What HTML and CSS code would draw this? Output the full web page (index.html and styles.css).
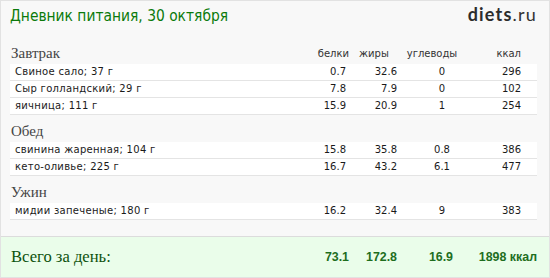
FILE: index.html
```html
<!DOCTYPE html>
<html lang="ru">
<head>
<meta charset="utf-8">
<link rel="stylesheet" href="styles.css">
</head>
<body>
<div class="card">
  <div class="top">
    <div class="title">Дневник питания, 30 октября</div>
    <div class="logo"><b>diets</b>.ru</div>
  </div>

  <div class="section">
    <div class="shead">
      <div class="sname">Завтрак</div>
      <div class="h h1">белки</div>
      <div class="h h2">жиры</div>
      <div class="h h3">углеводы</div>
      <div class="h h4">ккал</div>
    </div>
    <div class="row"><div class="n">Свиное сало; 37 г</div><div class="c1">0.7</div><div class="c2">32.6</div><div class="c3">0</div><div class="c4">296</div></div>
    <div class="row"><div class="n">Сыр голландский; 29 г</div><div class="c1">7.8</div><div class="c2">7.9</div><div class="c3">0</div><div class="c4">102</div></div>
    <div class="row"><div class="n">яичница; 111 г</div><div class="c1">15.9</div><div class="c2">20.9</div><div class="c3">1</div><div class="c4">254</div></div>
  </div>

  <div class="section">
    <div class="shead"><div class="sname">Обед</div></div>
    <div class="row"><div class="n">свинина жаренная; 104 г</div><div class="c1">15.8</div><div class="c2">35.8</div><div class="c3">0.8</div><div class="c4">386</div></div>
    <div class="row"><div class="n">кето-оливье; 225 г</div><div class="c1">16.7</div><div class="c2">43.2</div><div class="c3">6.1</div><div class="c4">477</div></div>
  </div>

  <div class="section">
    <div class="shead"><div class="sname">Ужин</div></div>
    <div class="row"><div class="n">мидии запеченые; 180 г</div><div class="c1">16.2</div><div class="c2">32.4</div><div class="c3">9</div><div class="c4">383</div></div>
  </div>

  <div class="total">
    <div class="tname">Всего за день:</div>
    <div class="t1">73.1</div>
    <div class="t2">172.8</div>
    <div class="t3">16.9</div>
    <div class="t4">1898 ккал</div>
  </div>
</div>
</body>
</html>
```

FILE: styles.css
```css
html, body {
  margin: 0;
  padding: 0;
}
body {
  width: 550px;
  height: 278px;
  overflow: hidden;
  background: #f8f8f8;
}
.card {
  box-sizing: border-box;
  width: 550px;
  height: 278px;
  border: 1px solid #e2e2e2;
  background: #f8f8f8;
  display: flex;
  flex-direction: column;
}
.top {
  display: flex;
  justify-content: space-between;
  align-items: baseline;
  height: 36px;
  padding: 0 12px 0 9px;
}
.title {
  font-family: "DejaVu Sans Condensed", "DejaVu Sans", sans-serif;
  font-size: 15.4px;
  line-height: 20px;
  padding-top: 5px;
  color: #0b7a0b;
}
.logo {
  font-family: "Lato", sans-serif;
  font-size: 18px;
  letter-spacing: 1.2px;
  color: #333;
}
.logo b {
  font-weight: 700;
  color: #2c2c2c;
}
.section {
  padding: 0 12px 0 9px;
}
.shead {
  display: grid;
  grid-template-columns: 1fr 60px 50px 66px 56px 16px;
  align-items: end;
  height: 27px;
}
.sname {
  font-family: "Liberation Serif", serif;
  font-size: 15px;
  line-height: 18px;
  color: #444;
  padding-left: 1px;
  padding-bottom: 2px;
}
.h {
  font-family: "DejaVu Sans", sans-serif;
  font-size: 10px;
  line-height: 16px;
  color: #333;
  padding-bottom: 2px;
}
.h1 { text-align: right; }
.h2 { text-align: center; }
.h3 { text-align: center; }
.h4 { text-align: right; }
.row {
  display: grid;
  grid-template-columns: 1fr 56px 51px 90px 34px 16px;
  height: 16px;
  background: #fff;
  border-bottom: 1px solid #e4e4e4;
  font-family: "DejaVu Sans", sans-serif;
  font-size: 10px;
  line-height: 16px;
  color: #1a1a1a;
}
.n { padding-left: 5px; white-space: nowrap; letter-spacing: 0.3px; }
.c1, .c2, .c4 { text-align: right; }
.c3 { text-align: center; }
.total {
  margin-top: auto;
  height: 40px;
  border-top: 1px solid #dcdcdc;
  background: #eafdea;
  display: grid;
  grid-template-columns: 1fr 58px 48px 56px 84px;
  align-items: center;
  padding: 0 12px 0 10px;
}
.tname {
  font-family: "Liberation Serif", serif;
  font-size: 16.6px;
  color: #0e520e;
}
.t1, .t2, .t3, .t4 {
  font-family: "Liberation Sans", sans-serif;
  font-weight: 700;
  font-size: 12.4px;
  color: #1e6e1e;
  text-align: right;
}
```
